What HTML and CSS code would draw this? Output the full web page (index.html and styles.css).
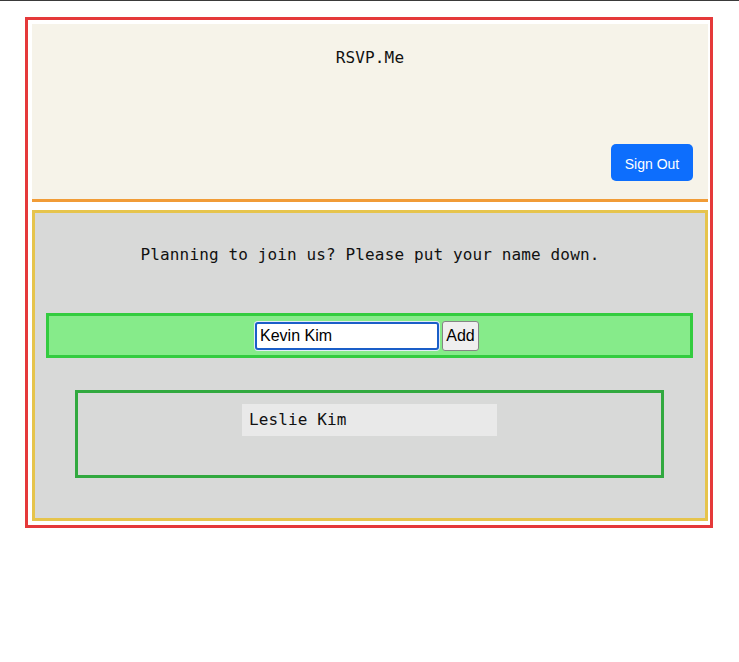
FILE: index.html
```html
<!DOCTYPE html>
<html lang="en">
<head>
<meta charset="utf-8">
<title>RSVP.Me</title>
<link rel="stylesheet" href="styles.css">
</head>
<body>
  <div class="app">
    <header class="header">
      <div class="title">RSVP.Me</div>
      <button class="signout" type="button">Sign Out</button>
    </header>
    <main class="panel">
      <p class="prompt">Planning to join us? Please put your name down.</p>
      <form class="add-form">
        <input class="name-input" type="text" value="Kevin Kim">
        <button class="add-btn" type="button">Add</button>
      </form>
      <ul class="guests">
        <li class="guest">Leslie Kim</li>
      </ul>
    </main>
  </div>
</body>
</html>
```

FILE: styles.css
```css
html, body {
  margin: 0;
  padding: 0;
  background: #ffffff;
}

body {
  border-top: 1px solid #3a3a3a;
  font-family: "DejaVu Sans Mono", monospace;
  font-size: 16px;
  color: #111111;
}

.app {
  width: 676px;
  margin: 16px 0 0 25px;
  border: 3px solid #e5393a;
  padding: 4px 2px 4px 4px;
}

.header {
  width: 676px;
  height: 175px;
  background: #f6f3e9;
  border-bottom: 3px solid #f19c37;
  display: flex;
  flex-direction: column;
  align-items: center;
}

.title {
  margin-top: 24px;
  line-height: 19px;
  font-family: "DejaVu Sans Mono", monospace;
  font-size: 16px;
  letter-spacing: 0.12px;
  color: #111;
}

.signout {
  margin-top: auto;
  margin-bottom: 18px;
  align-self: flex-end;
  margin-right: 15px;
  width: 82px;
  height: 37px;
  border: none;
  border-radius: 5px;
  background: #0d6efd;
  color: #ffffff;
  font-family: "Liberation Sans", Arial, sans-serif;
  font-size: 14px;
  line-height: 37px;
  padding: 2px 0 0 0;
}

.panel {
  display: block;
  margin-top: 8px;
  width: 670px;
  border: 3px solid #e6c44c;
  background: #d8d9d8;
  padding: 32px 0 40px 0;
}

.prompt {
  margin: 0;
  text-align: center;
  line-height: 19px;
  font-family: "DejaVu Sans Mono", monospace;
  font-size: 16px;
  letter-spacing: 0.13px;
}

.add-form {
  margin: 49px 12px 0 11px;
  border: 3px solid #33cc3f;
  background: #86eb8a;
  height: 39px;
  display: flex;
  align-items: center;
  justify-content: center;
  padding-right: 5px;
}

.name-input {
  width: 184px;
  height: 28px;
  box-sizing: border-box;
  margin: 0;
  padding: 1px 3px;
  border: 2px solid #1a5ec8;
  border-radius: 3px;
  box-shadow: 0 0 0 1px #e3ecf8;
  outline: none;
  background: #ffffff;
  font-family: "Liberation Sans", Arial, sans-serif;
  font-size: 16px;
  color: #000;
}

.add-btn {
  margin-left: 3px;
  width: 37px;
  height: 30px;
  box-sizing: border-box;
  padding: 0;
  border: 1px solid #858585;
  border-radius: 3px;
  background: #efefef;
  font-family: "Liberation Sans", Arial, sans-serif;
  font-size: 16px;
  color: #000;
}

.guests {
  list-style: none;
  margin: 32px 41px 0 40px;
  border: 3px solid #31a93f;
  padding: 11px 0 39px 0;
  display: flex;
  flex-direction: column;
  align-items: center;
}

.guest {
  width: 255px;
  height: 32px;
  box-sizing: border-box;
  background: #e9e9e9;
  padding-left: 7px;
  line-height: 32px;
  font-family: "DejaVu Sans Mono", monospace;
  font-size: 16px;
  letter-spacing: 0.12px;
  color: #111;
}
```
